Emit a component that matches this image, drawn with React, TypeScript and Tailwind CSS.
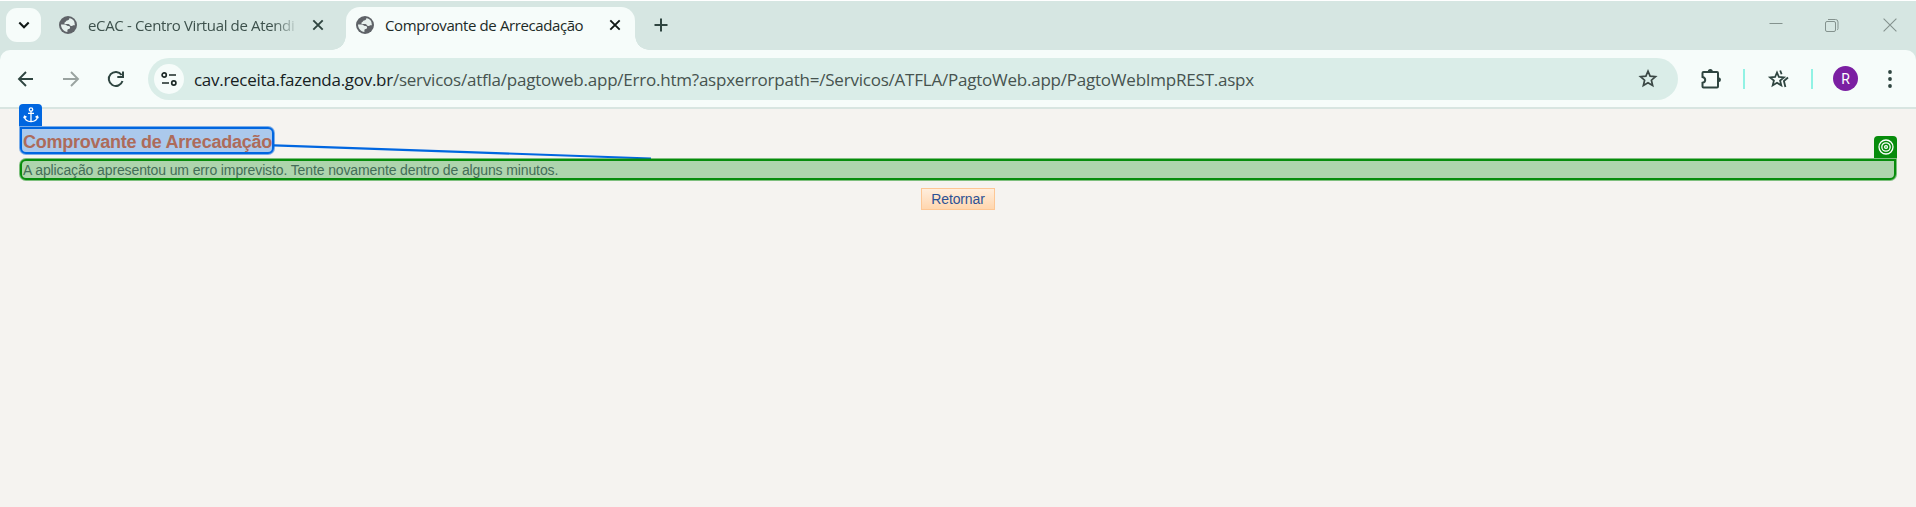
import React from "react";

const UI = "font-['Open_Sans','Noto_Sans',sans-serif]";

function Globe() {
  return (
    <svg className="h-[18px] w-[18px] shrink-0" viewBox="0 0 18 18">
      <circle cx="9" cy="9" r="9" fill="#5f6368" />
      <path
        d="M10.500 2.100C10.300 3.500 9.500 4.300 8 4.500 6.900 4.700 7.200 5.900 6 6.200 5 6.500 5 8 6.300 8h2.900c1.600 0 1.500 2 3.200 2 1 0 1.200-.8 1.800-.8h1.700A7 7 0 0 0 10.500 2.100zM2 8.500c0 4 2.800 7 6.400 7.400v-1.600c0-.7.400-1 1.200-1.200.9-.2 1.500-.7 1.500-1.600 0-1.200-1-1.400-2-1.400-1.600 0-1.600-1.600-3.100-1.600z"
        fill="#e6f0ed"
      />
    </svg>
  );
}

function Cross({ color }: { color: string }) {
  return (
    <svg className="h-3 w-3 shrink-0" viewBox="0 0 12 12" fill="none" stroke={color} strokeWidth="1.9">
      <path d="M1.300 1.300 10.700 10.700M10.700 1.300 1.300 10.700" />
    </svg>
  );
}

function TabStrip() {
  return (
    <div className="flex h-[49px] bg-[#d6e6e2]">
      <div className="ml-1.5 mt-[7px] flex h-[34px] w-[35px] items-center justify-center rounded-[11px] bg-[#f6fcfa]">
        <svg className="h-3 w-3" viewBox="0 0 12 12" fill="none" stroke="#101816" strokeWidth="2.100">
          <path d="M1.300 3.600 6 8.200l4.700-4.600" />
        </svg>
      </div>
      <div className="ml-[18px] flex h-[49px] w-[287px] items-start">
        <div className="mt-[15px]"><Globe /></div>
        <div className="ml-[11px] mt-[14px] w-[211px] overflow-hidden whitespace-nowrap text-[15px] leading-[20px] tracking-[-0.35px] text-[#3d514c] [mask-image:linear-gradient(to_right,black_185px,transparent_211px)]">
          eCAC - Centro Virtual de Atendi
        </div>
        <div className="ml-[13px] mt-[18px]"><Cross color="#2f4540" /></div>
      </div>
      <div className="relative mt-1.5 flex h-[43px] w-[289px] rounded-t-[14px] bg-[#f6fcfa]">
        <div className="absolute -left-[14px] bottom-0 h-[14px] w-[14px] bg-[radial-gradient(circle_at_0_0,transparent_13.500px,#f6fcfa_14px)]" />
        <div className="absolute -right-[14px] bottom-0 h-[14px] w-[14px] bg-[radial-gradient(circle_at_100%_0,transparent_13.500px,#f6fcfa_14px)]" />
        <div className="ml-[10px] mt-[9px]"><Globe /></div>
        <div className="ml-[11px] mt-2 w-[212px] whitespace-nowrap text-[15px] leading-[20px] tracking-[-0.4px] text-[#1c2a27]">
          Comprovante de Arrecadação
        </div>
        <div className="ml-[12px] mt-3"><Cross color="#101816" /></div>
      </div>
      <svg className="ml-[19px] mt-[17px] h-[14px] w-[14px]" viewBox="0 0 14 14" stroke="#2f4540" strokeWidth="2">
        <path d="M7 .5v13M.5 7h13" />
      </svg>
      <div className="ml-auto mr-[19px] mt-[17px] flex gap-[42px] text-[#84928e]">
        <svg className="h-[14px] w-[14px]" viewBox="0 0 14 14" stroke="currentColor"><path d="M.5 5.500h13" /></svg>
        <svg className="h-[14px] w-[14px]" viewBox="0 0 14 14" fill="none" stroke="currentColor">
          <rect x=".5" y="3.500" width="10" height="10" rx="1.500" />
          <path d="M3 1.500h7.500q2.500 0 2.500 2.500v6.500q0 1-1 1.500" />
        </svg>
        <svg className="ml-[2px] h-[14px] w-[14px]" viewBox="0 0 14 14" stroke="currentColor" strokeWidth="1.100">
          <path d="M.6.600l12.800 12.800M13.400.600.600 13.400" />
        </svg>
      </div>
    </div>
  );
}

const STAR = "M10 2.200l2.100 5 5.400.450-4.100 3.550 1.250 5.300L10 13.700l-4.650 2.800 1.250-5.300L2.500 7.650l5.400-.450z";

function Toolbar() {
  return (
    <div className="h-[57px] bg-[#d6e6e2]">
      <div className="flex h-[57px] items-center rounded-t-[10px] bg-[#f6fcfa]">
        <svg className="ml-[17px] h-[18px] w-[18px]" viewBox="0 0 18 18" fill="none" stroke="#2f4540" strokeWidth="1.900">
          <path d="M16 9H2.500M9 2 2 9l7 7" />
        </svg>
        <svg className="ml-[27px] h-[18px] w-[18px]" viewBox="0 0 18 18" fill="none" stroke="#9aa3a0" strokeWidth="1.900">
          <path d="M1 9h13.500M9 2l7 7-7 7" />
        </svg>
        <svg className="ml-[27px] h-[18px] w-[18px]" viewBox="0 0 18 18" fill="none" stroke="#2f4540" strokeWidth="2">
          <path d="M14.600 5A7 7 0 1 0 15.500 11M16 1.500V7h-5.700" />
        </svg>
        <div className="ml-[23px] flex h-[42px] w-[1530px] items-center rounded-full bg-[#daede8]">
          <div className="ml-1.5 flex h-[30px] w-[30px] items-center justify-center rounded-full bg-[#f6fcfa]">
            <svg className="h-4 w-4" viewBox="0 0 16 16" fill="none" stroke="#1c2a27" strokeWidth="1.700">
              <circle cx="3.200" cy="4" r="2.100" />
              <path d="M8 4h7M1 12h7" />
              <circle cx="12.800" cy="12" r="2.100" />
            </svg>
          </div>
          <div className="ml-[10px] mt-[2px] whitespace-nowrap text-[17px] leading-[24px] tracking-[-0.225px] text-[#46534f]">
            <span className="tracking-[-0.28px] text-[#17211f]">cav.receita.fazenda.gov.br</span>
            /servicos/atfla/pagtoweb.app/Erro.htm?aspxerrorpath=/Servicos/ATFLA/PagtoWeb.app/PagtoWebImpREST.aspx
          </div>
          <svg className="ml-auto mr-5 h-5 w-5" viewBox="0 0 20 20" fill="none" stroke="#3b4845" strokeWidth="1.700">
            <path d={STAR} />
          </svg>
        </div>
        <svg className="ml-[22px] h-[22px] w-[22px]" viewBox="0 0 22 22" fill="none" stroke="#2f4540" strokeWidth="2">
          <path d="M3.500 4h13.500q1 0 1 1v13.500q0 1-1 1h-13.500q-1 0-1-1v-3.700c3.600-1 3.600-4.800 0-5.800V5q0-1 1-1z" />
          <path d="M7.800 3.500a2.500 2.500 0 0 1 5 0zM18.500 9.200a2.500 2.500 0 0 1 0 5z" fill="#2f4540" stroke="none" />
        </svg>
        <div className="ml-[21px] h-5 w-[2px] bg-[#91f2e4]" />
        <svg className="ml-[22px] h-[22px] w-[22px]" viewBox="0 0 22 22" fill="none" stroke="#2f4540" strokeWidth="1.800">
          <path d="M10 4.500l1.900 4.500 5 .400-3.800 3.200 1.200 4.800L10 14.800l-4.300 2.600 1.200-4.800-3.800-3.200 5-.400z" />
          <path d="M13.200 2.500l1.400 3.800M21 9.500l-4.100 3.500 1.500 6" />
        </svg>
        <div className="ml-[22px] h-5 w-[2px] bg-[#91f2e4]" />
        <div className="ml-5 flex h-[25px] w-[25px] items-center justify-center rounded-full bg-[#7b1fa2] font-[Roboto,sans-serif] text-[14px] leading-none text-white">
          R
        </div>
        <svg className="ml-[30px] h-[18px] w-1" viewBox="0 0 4 18" fill="#2f4540">
          <circle cx="2" cy="2" r="1.900" /><circle cx="2" cy="9" r="1.900" /><circle cx="2" cy="16" r="1.900" />
        </svg>
      </div>
    </div>
  );
}

function Page() {
  return (
    <main className="relative flex-1 px-5 pt-[18px] font-['Liberation_Sans',Arial,sans-serif]">
      <svg className="absolute left-[274px] top-[34px] h-[20px] w-[380px]" viewBox="0 0 380 20" stroke="#0066e0" strokeWidth="2.200">
        <path d="M0 2.300 377 15.500" />
      </svg>
      <div className="relative h-[27px] w-[254px] rounded-[6px] rounded-tl-none border-2 border-[#0066e0] bg-[#abc9ec] pl-px ring-1 ring-[#0066e0]/50">
        <div className="absolute -left-[3px] -top-[25px] flex h-[22px] w-[23px] items-center justify-center rounded-t-[4px] bg-[#0066e0]">
          <svg className="h-4 w-4" viewBox="0 0 16 16" fill="none" stroke="white" strokeWidth="1.300">
            <circle cx="8" cy="2.500" r="1.700" />
            <path d="M8 4.200v10.500M5 6.300h6M1.500 9.500q.5 5 6.500 5.200 6-.2 6.500-5.200M.8 11.300l.7-2.100 2 1M15.200 11.300l-.7-2.100-2 1" />
          </svg>
        </div>
        <h1 className="whitespace-nowrap text-[18px] font-bold leading-[26px] tracking-[-0.25px] text-[#ad6b5a]">Comprovante de Arrecadação</h1>
      </div>
      <div className="relative mt-[5px] h-[21px] w-[1876px] rounded-[6px] rounded-tr-none border-2 border-[#078c0c] bg-[#aed5ad] pl-px ring-1 ring-[#078c0c]/50">
        <div className="absolute -right-[3px] -top-[25px] flex h-[22px] w-[23px] items-center justify-center rounded-t-[4px] bg-[#078c0c]">
          <svg className="h-4 w-4" viewBox="0 0 16 16" fill="none" stroke="white" strokeWidth="1.300">
            <circle cx="8" cy="8" r="7" /><circle cx="8" cy="8" r="4.200" /><circle cx="8" cy="8" r="1.400" />
          </svg>
        </div>
        <p className="whitespace-nowrap text-[14px] leading-[18px] tracking-[-0.12px] text-[#436e58]">
          A aplicação apresentou um erro imprevisto. Tente novamente dentro de alguns minutos.
        </p>
      </div>
      <div className="mt-2 flex justify-center">
        <button className="h-[22px] w-[74px] border border-[#fdc795] bg-linear-to-b from-[#ffeedd] to-[#ffd6ae] text-[14px] leading-[20px] tracking-[-0.12px] text-[#2d5295]">
          Retornar
        </button>
      </div>
    </main>
  );
}

export default function App() {
  return (
    <div className={`flex h-[507px] w-[1916px] flex-col overflow-hidden bg-[#f5f3f0] ${UI}`}>
      <div className="h-px shrink-0 bg-white" />
      <TabStrip />
      <Toolbar />
      <div className="h-[2px] bg-[#d8e5e1]" />
      <Page />
    </div>
  );
}
